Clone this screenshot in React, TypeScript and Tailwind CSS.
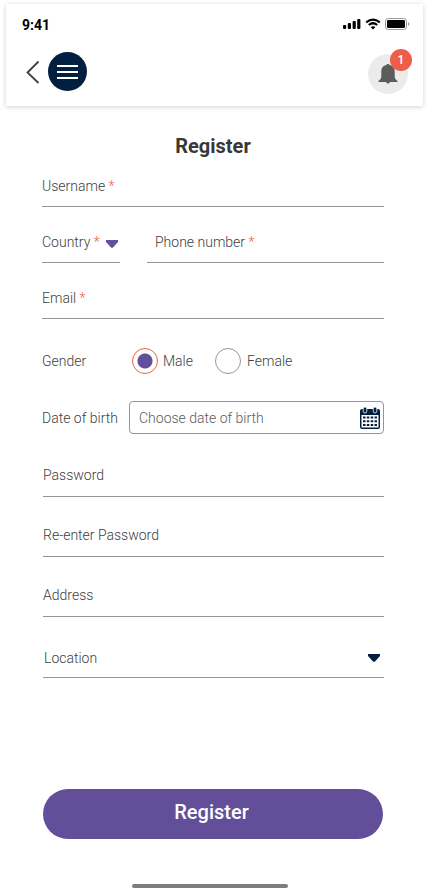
import type { ReactNode } from "react";

function Required() {
  return <span className="text-[#f0604a]"> *</span>;
}

function Caret({ className }: { className: string }) {
  return (
    <svg viewBox="0 0 12 8" className={`pointer-events-none absolute h-2 w-3 ${className}`} aria-hidden="true">
      <path d="M0 0h12v2L7 7.4q-1 .8-2 0L0 2z" fill="currentColor" />
    </svg>
  );
}

type FieldProps = { id: string; type?: string; className?: string; children: ReactNode };

function Field({ id, type = "text", className = "pb-[3px]", children }: FieldProps) {
  return (
    <div className={`flex h-10 items-center border-b border-[#969696] ${className}`}>
      <label htmlFor={id} className="shrink-0">{children}</label>
      <input id={id} type={type} className="ml-2 h-full min-w-0 flex-1 bg-transparent outline-none" />
    </div>
  );
}

function StatusIcons() {
  return (
    <div className="-mr-[3px] flex items-center gap-1 pb-[3px]">
      <svg viewBox="0 0 18 12" className="h-3 w-[18px]" aria-hidden="true">
        <rect x="0" y="7" width="3.2" height="4" rx="1" />
        <rect x="4.8" y="5" width="3.2" height="6" rx="1" />
        <rect x="9.6" y="3" width="3.2" height="8" rx="1" />
        <rect x="14.2" y="1" width="3.2" height="10" rx="1" />
      </svg>
      <svg viewBox="0 0 16 12" className="h-3 w-4" aria-hidden="true">
        <path d="M1.2 4.3Q8-1.2 14.8 4.3M3.8 7Q8 3.5 12.2 7" fill="none" stroke="#000" strokeWidth="2.2" />
        <path d="M5.6 9.1Q8 7.2 10.4 9.1L8 11.5z" />
      </svg>
      <svg viewBox="0 0 25 12" className="h-3 w-[25px]" aria-hidden="true">
        <rect x=".5" y=".5" width="21" height="11" rx="2.7" fill="none" stroke="#9a9a9a" />
        <rect x="2" y="2" width="18" height="8" rx="1.3" />
        <path d="M23 4v4q1.4-.6 1.4-2T23 4" fill="#9a9a9a" />
      </svg>
    </div>
  );
}

function CalendarIcon() {
  return (
    <svg viewBox="0 0 20 22" className="h-[22px] w-5" aria-hidden="true">
      <path d="M0 4q0-2 2-2h16q2 0 2 2v16q0 2-2 2H2q-2 0-2-2z" fill="#031f40" />
      <rect x="3.2" y="0" width="3.6" height="6" rx="1.8" fill="#031f40" stroke="#fff" strokeWidth=".8" />
      <rect x="13.2" y="0" width="3.6" height="6" rx="1.8" fill="#031f40" stroke="#fff" strokeWidth=".8" />
      <rect x="1.5" y="8" width="17" height="12.5" fill="#fff" />
      <path d="M3 9.500h2.500v2H3zM6.800 9.500h2.500v2H6.800zM10.700 9.500h2.500v2h-2.500zM14.500 9.500H17v2h-2.500zM3 13.300h2.500v2H3zM6.800 13.300h2.500v2H6.800zM10.700 13.300h2.500v2h-2.500zM14.500 13.300H17v2h-2.500zM3 17h2.500v2H3zM6.800 17h2.500v2H6.800zM10.700 17h2.500v2h-2.500zM14.500 17H17v2h-2.500z" fill="#031f40" />
    </svg>
  );
}

function Header() {
  return (
    <header className="mx-[6px] mt-1 h-[102px] bg-white px-4 pt-[11px] shadow-[0_1px_5px_rgba(0,0,0,0.18)]">
      <div className="flex h-5 items-center justify-between">
        <span className="text-sm font-bold text-black">9:41</span>
        <StatusIcons />
      </div>
      <div className="mt-[13px] flex items-start justify-between">
        <div className="flex items-center gap-2 pt-1 pl-1">
          <button type="button" aria-label="Back">
            <svg viewBox="0 0 14 24" className="h-6 w-[14px]" fill="none" stroke="#404040" strokeWidth="1.8" aria-hidden="true">
              <path d="M12.5 1.5 1.5 12.500 12.5 23" />
            </svg>
          </button>
          <button type="button" aria-label="Menu" className="flex size-[39px] items-center justify-center rounded-full bg-[#031f40]">
            <svg viewBox="0 0 21 14" className="h-[14px] w-[21px]" fill="#fff" aria-hidden="true">
              <path d="M0 0h21v2H0zM0 6h21v2H0zM0 12h21v2H0z" />
            </svg>
          </button>
        </div>
        <button type="button" aria-label="Notifications" className="relative mt-[6px] -mr-px flex size-10 items-center justify-center rounded-full bg-[#ebebeb]">
          <svg viewBox="0 0 20 20" className="size-5" fill="#5c5c5c" aria-hidden="true">
            <path d="M10 0q1.5 0 1.7 1 4.8 1 5 6v6q0 2.5 2.8 4v1H12q-.4 1.6-2 1.6t-2-1.6H.5v-1q2.8-1.5 2.8-4V7q.2-5 5-6Q8.5 0 10 0" />
          </svg>
          <span className="absolute -top-[5px] -right-1 flex size-[22px] items-center justify-center rounded-full bg-[#ee5d4a] text-xs font-medium text-white">1</span>
        </button>
      </div>
    </header>
  );
}

const radioClass =
  "size-[26px] shrink-0 appearance-none rounded-full border border-[#969696] checked:border-[#f0623c] checked:bg-[radial-gradient(circle,#634f99_7px,transparent_8px)]";

export default function App() {
  return (
    <div className="flex min-h-screen flex-col overflow-hidden bg-white font-['Roboto',sans-serif]">
      <Header />
      <main className="flex flex-1 flex-col pr-[45px] pl-[42px] text-sm leading-5 font-light text-[#404040]">
        <h1 className="mt-[26px] text-center text-xl leading-7 font-bold text-[#383838]">Register</h1>
        <form className="mt-[7px] flex flex-1 flex-col">
          <div className="flex flex-col gap-4">
            <Field id="username" className="pb-px">Username<Required /></Field>
            <div className="flex gap-[27px]">
              <div className="relative flex h-10 w-[78px] shrink-0 items-center border-b border-[#969696] pb-px">
                <label htmlFor="country" className="shrink-0">Country<Required /></label>
                <select id="country" defaultValue="" className="h-full min-w-0 flex-1 appearance-none bg-transparent outline-none">
                  <option value="" />
                </select>
                <Caret className="top-[17px] right-[2px] text-[#634f99]" />
              </div>
              <Field id="phone" type="tel" className="min-w-0 flex-1 pb-px pl-2">Phone number<Required /></Field>
            </div>
            <Field id="email" type="email" className="pb-px">Email<Required /></Field>
          </div>

          <fieldset className="mt-[29px] flex items-center">
            <legend className="float-left w-[90px]">Gender</legend>
            <label className="flex items-center gap-[5px]">
              <input type="radio" name="gender" defaultChecked className={radioClass} />
              Male
            </label>
            <label className="ml-[22px] flex items-center gap-[6px]">
              <input type="radio" name="gender" className={radioClass} />
              Female
            </label>
          </fieldset>

          <div className="mt-[27px] flex items-center">
            <label htmlFor="dob" className="w-[87px] shrink-0">Date of birth</label>
            <div className="flex h-[33px] min-w-0 flex-1 items-center rounded border border-[#969696] pr-[3px]">
              <input id="dob" type="text" placeholder="Choose date of birth" className="h-full min-w-0 flex-1 bg-transparent pl-[9px] outline-none placeholder:text-[#5c5c5c]" />
              <button type="button" aria-label="Open calendar"><CalendarIcon /></button>
            </div>
          </div>

          <div className="mt-[23px] ml-px flex flex-col gap-5">
            <Field id="password" type="password">Password</Field>
            <Field id="password-again" type="password">Re-enter Password</Field>
            <Field id="address">Address</Field>
            <div className="relative flex h-[41px] items-center border-b border-[#969696] pt-px">
              <label htmlFor="location" className="shrink-0 pl-px">Location</label>
              <select id="location" defaultValue="" className="h-full min-w-0 flex-1 appearance-none bg-transparent outline-none">
                <option value="" />
              </select>
              <Caret className="right-1 text-[#031f40]" />
            </div>
          </div>

          <button type="submit" className="mx-px mt-auto h-[50px] rounded-full bg-[#634f99] pr-[3px] pb-1 text-xl font-medium text-white">
            Register
          </button>
        </form>
      </main>
      <div className="flex justify-center pt-[45px] pr-[10px] pb-[5px]">
        <div className="h-1 w-[156px] rounded-full bg-[#7d7d7d]" />
      </div>
    </div>
  );
}
